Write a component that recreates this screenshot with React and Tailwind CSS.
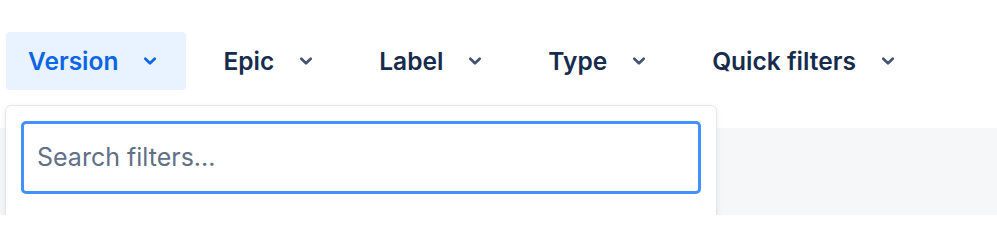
import React from "react";

const Chevron = ({ className }) => (
  <svg width="16" height="16" viewBox="0 0 16 16" className={className} fill="none">
    <path d="M3.3 5.8 L8 10.3 L12.7 5.8" stroke="currentColor" strokeWidth="2.7" strokeLinecap="round" strokeLinejoin="round" />
  </svg>
);

const FilterButton = ({ label, active }) => (
  <button
    className={
      active
        ? "flex h-[58px] items-center gap-[24px] rounded-[4px] bg-[#e9f2ff] pl-[22px] pr-[28px] text-[#0c66e4]"
        : "flex h-[58px] items-center gap-[24px] rounded-[4px] pl-[22px] pr-[28px] text-[#172b4d]"
    }
  >
    <span className="text-[24.5px] font-semibold leading-none">{label}</span>
    <Chevron className={active ? "text-[#0c66e4]" : "text-[#44546f]"} />
  </button>
);

export default function App() {
  return (
    <div
      className="relative h-[215px] w-[997px] overflow-hidden bg-white"
      style={{ fontFamily: "Inter, 'Noto Sans', sans-serif" }}
    >
      <div className="flex h-[128px] items-start gap-[15px] pl-[6px] pt-[32px]">
        <FilterButton label="Version" active />
        <FilterButton label="Epic" />
        <FilterButton label="Label" />
        <FilterButton label="Type" />
        <FilterButton label="Quick filters" />
      </div>
      <div className="h-[87px] w-full bg-[#f6f7f8]" />
      <div className="absolute left-[5px] top-[105px] h-[140px] w-[712px] rounded-[6px] border border-[#e4e6ea] bg-white p-[15px] shadow-[0_2px_6px_rgba(9,30,66,0.08)]">
        <div className="flex h-[73px] items-center rounded-[5px] border-[3px] border-[#4391ff] px-[13px]">
          <span className="text-[25px] text-[#626f86]">Search filters...</span>
        </div>
      </div>
    </div>
  );
}
